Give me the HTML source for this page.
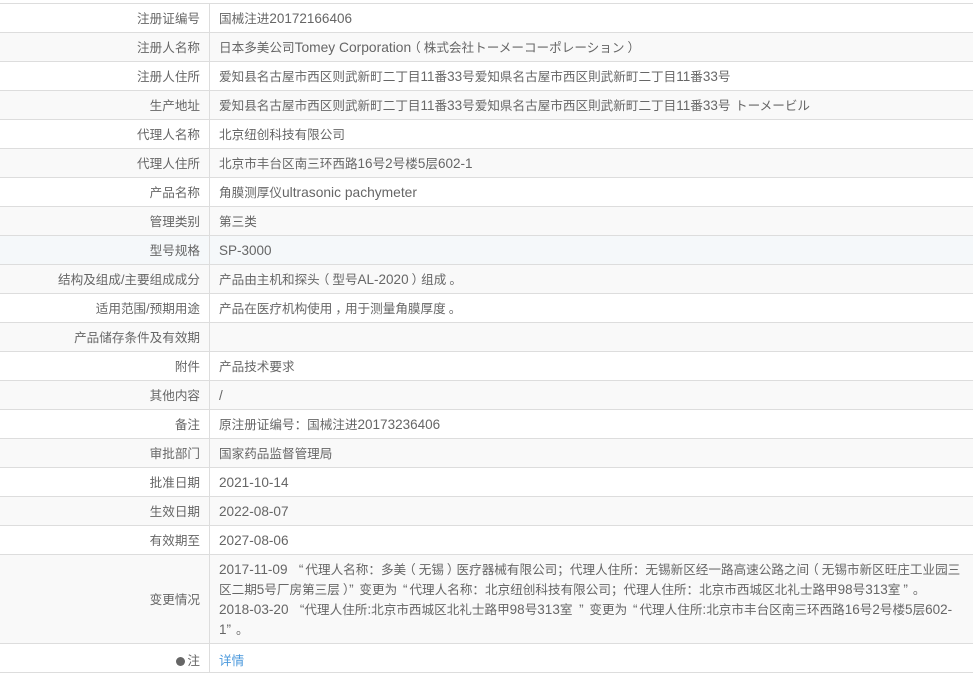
<!DOCTYPE html>
<html lang="zh">
<head>
<meta charset="utf-8">
<style>
html,body{margin:0;padding:0;width:973px;height:660px;overflow:hidden;background:#fff}
body{font-family:"Liberation Sans","Noto Sans CJK SC",sans-serif;font-size:12.6px;color:#666}
table{position:absolute;left:0;top:3px;width:973px;border-collapse:collapse;table-layout:fixed}
td{border:1px solid #ddd;border-left:0;border-right:0;padding:2px 0 0;height:26px;line-height:26px;vertical-align:middle;white-space:nowrap;overflow:hidden}
td.l{width:200px;padding-right:9px;text-align:right;border-right:1px solid #ddd}
td.r{padding-left:9px}
tr:nth-child(even) td{background:#f9f9f9}
tr.h td{background:#f5f8fa}
td.m{line-height:20px;height:86px}
a{color:#4a98dc;text-decoration:none}
i{font-style:normal;font-size:13.5px;line-height:0}
i.w{font-size:13.8px}
i.d{font-size:13.6px}
i.a{margin:0 2px 0 3px}
i.b{margin:0 2px 0 2px}
i.g{margin-right:2px}
b{font-weight:normal;position:relative;line-height:0}
b.o{left:-3px}
b.e{left:3px}
b.c{font-family:"Noto Sans CJK TC",sans-serif}
.low{position:relative;top:2px}
.dot{display:inline-block;width:9px;height:9px;border-radius:50%;background:#666;margin-right:2px;vertical-align:-1px}
</style>
</head>
<body>
<table>
<tr><td class="l">注册证编号</td><td class="r">国械注进<i>20172166406</i></td></tr>
<tr><td class="l">注册人名称</td><td class="r">日本多美公司<i class="w">Tomey Corporation</i><b class="o">（</b>株式会社トーメーコーポレーション<b class="e">）</b></td></tr>
<tr><td class="l">注册人住所</td><td class="r">爱知县名古屋市西区则武新町二丁目<i>11</i>番<i>33</i>号爱知県名古屋市西区則武新町二丁目<i>11</i>番<i>33</i>号</td></tr>
<tr><td class="l">生产地址</td><td class="r">爱知县名古屋市西区则武新町二丁目<i>11</i>番<i>33</i>号爱知県名古屋市西区則武新町二丁目<i>11</i>番<i>33</i>号<span style="margin-left:1px"> </span>トーメービル</td></tr>
<tr><td class="l">代理人名称</td><td class="r">北京纽创科技有限公司</td></tr>
<tr><td class="l">代理人住所</td><td class="r">北京市丰台区南三环西路<i>16</i>号<i>2</i>号楼<i>5</i>层<i>602-1</i></td></tr>
<tr><td class="l">产品名称</td><td class="r">角膜测厚仪<i class="w">ultrasonic pachymeter</i></td></tr>
<tr><td class="l">管理类别</td><td class="r">第三类</td></tr>
<tr class="h"><td class="l">型号规格</td><td class="r"><i>SP-3000</i></td></tr>
<tr><td class="l">结构及组成/主要组成成分</td><td class="r">产品由主机和探头<b class="o">（</b>型号<i>AL-2020</i><b class="e">）</b>组成<b class="e">。</b></td></tr>
<tr><td class="l">适用范围/预期用途</td><td class="r">产品在医疗机构使用<b class="e">，</b>用于测量角膜厚度<b class="e">。</b></td></tr>
<tr><td class="l">产品储存条件及有效期</td><td class="r"></td></tr>
<tr><td class="l">附件</td><td class="r">产品技术要求</td></tr>
<tr><td class="l">其他内容</td><td class="r"><i>/</i></td></tr>
<tr><td class="l">备注</td><td class="r">原注册证编号<b class="c">：</b>国械注进<i>20173236406</i></td></tr>
<tr><td class="l">审批部门</td><td class="r">国家药品监督管理局</td></tr>
<tr><td class="l">批准日期</td><td class="r"><i class="d">2021-10-14</i></td></tr>
<tr><td class="l">生效日期</td><td class="r"><i class="d">2022-08-07</i></td></tr>
<tr><td class="l">有效期至</td><td class="r"><i class="d">2027-08-06</i></td></tr>
<tr><td class="l">变更情况</td><td class="r m"><i class="d g">2017-11-09 &nbsp;&nbsp;“</i>代理人名称<b class="c">：</b>多美<b class="o">（</b>无锡<b class="e">）</b>医疗器械有限公司<b class="c">；</b>代理人住所<b class="c">：</b>无锡新区经一路高速公路之间<b class="o">（</b>无锡市新区旺庄工业园三<br>区二期<i>5</i>号厂房第三层<b class="e">）</b><i class="a">” </i>变更为<i class="b"> “</i>代理人名称<b class="c">：</b>北京纽创科技有限公司<b class="c">；</b>代理人住所<b class="c">：</b>北京市西城区北礼士路甲<i>98</i>号<i>313</i>室<i class="a">”</i><b class="e">。</b><br><i class="d">2018-03-20 &nbsp;&nbsp;“</i>代理人住所<i>:</i>北京市西城区北礼士路甲<i>98</i>号<i>313</i>室<i class="a"> ” </i>变更为<i class="b"> “</i>代理人住所<i>:</i>北京市丰台区南三环西路<i>16</i>号<i>2</i>号楼<i>5</i>层<i>602-</i><br><i class="a" style="margin-left:0">1”</i><b class="e">。</b></td></tr>
<tr><td class="l"><span class="low"><span class="dot"></span>注</span></td><td class="r"><a class="low" href="#">详情</a></td></tr>
</table>
</body>
</html>
